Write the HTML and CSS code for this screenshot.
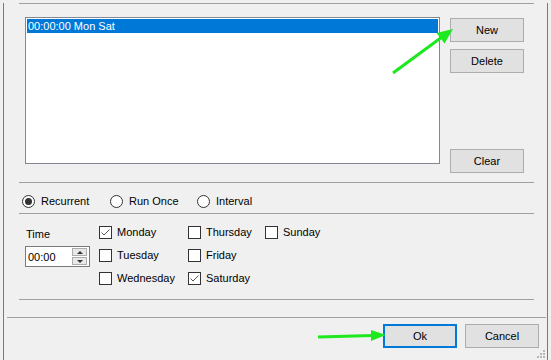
FILE: index.html
```html
<!DOCTYPE html>
<html lang="en">
<head>
    <meta charset="UTF-8">
    <title>Schedule</title>
    <link rel="stylesheet" href="styles.css">
</head>
<body>
    <div class="window">
        <div class="sep sep-first"></div>

        <div class="top">
            <div class="listbox">
                <div class="list-row selected">00:00:00 Mon Sat</div>
            </div>
            <div class="side-buttons">
                <button class="btn">New</button>
                <button class="btn">Delete</button>
                <button class="btn btn-clear">Clear</button>
            </div>
        </div>

        <div class="sep sep-mid"></div>

        <div class="mode-row">
            <label class="radio"><span class="radio-mark checked"></span>Recurrent</label>
            <label class="radio"><span class="radio-mark"></span>Run Once</label>
            <label class="radio"><span class="radio-mark"></span>Interval</label>
        </div>

        <div class="sep"></div>

        <div class="days">
            <div class="time-col">
                <div class="time-label">Time</div>
                <div class="spin">
                    <span class="spin-value">00:00</span>
                    <div class="spin-buttons">
                        <div class="spin-btn"><span class="tri-up"></span></div>
                        <div class="spin-btn"><span class="tri-down"></span></div>
                    </div>
                </div>
            </div>
            <div class="day-grid">
                <label class="check"><span class="box checked"><svg width="11" height="11" viewBox="0 0 11 11"><polyline points="1.5,5.5 4,8 9.5,2.5" fill="none" stroke="#555" stroke-width="1"/></svg></span>Monday</label>
                <label class="check"><span class="box"></span>Tuesday</label>
                <label class="check"><span class="box"></span>Wednesday</label>
                <label class="check"><span class="box"></span>Thursday</label>
                <label class="check"><span class="box"></span>Friday</label>
                <label class="check"><span class="box checked"><svg width="11" height="11" viewBox="0 0 11 11"><polyline points="1.5,5.5 4,8 9.5,2.5" fill="none" stroke="#555" stroke-width="1"/></svg></span>Saturday</label>
                <label class="check"><span class="box"></span>Sunday</label>
            </div>
        </div>

        <div class="sep"></div>

        <div class="footer-line"></div>
        <div class="footer">
            <button class="btn btn-default">Ok</button>
            <button class="btn">Cancel</button>
        </div>

        <svg class="grip" width="9" height="9" viewBox="0 0 9 9">
            <rect x="6" y="0" width="2" height="2" fill="#b8b8b8"/>
            <rect x="3" y="3" width="2" height="2" fill="#b8b8b8"/>
            <rect x="6" y="3" width="2" height="2" fill="#b8b8b8"/>
            <rect x="0" y="6" width="2" height="2" fill="#b8b8b8"/>
            <rect x="3" y="6" width="2" height="2" fill="#b8b8b8"/>
            <rect x="6" y="6" width="2" height="2" fill="#b8b8b8"/>
        </svg>
    </div>

    <!-- annotation arrows drawn over the dialog -->
    <svg class="arrows" width="551" height="360" viewBox="0 0 551 360">
        <line x1="393" y1="73" x2="442" y2="37" stroke="#1ee81e" stroke-width="3"/>
        <polygon points="453,29 444.5,43.5 436.5,33" fill="#1ee81e"/>
        <line x1="318" y1="337" x2="373" y2="335.5" stroke="#1ee81e" stroke-width="3"/>
        <polygon points="386,335 371,330 371,341" fill="#1ee81e"/>
    </svg>
</body>
</html>
```

FILE: styles.css
```css
body {
    margin: 0;
    padding: 0;
    background-color: #f0f0f0;
    font-family: "Liberation Sans", Arial, sans-serif;
    font-size: 11px;
    color: #000;
}
.window {
    position: relative;
    box-sizing: border-box;
    margin-left: 3px;
    width: 545px;
    height: 358px;
    border-left: 1px solid #7a7a7a;
    border-right: 1px solid #7a7a7a;
    border-bottom: 1px solid #7a7a7a;
}
.sep {
    height: 0;
    margin: 0 13px 0 15px;
    border-top: 1px solid #a0a0a0;
}
.sep-first {
    margin-top: 3px;
}
.sep-mid {
    margin-top: 9px;
}
.top {
    display: flex;
    align-items: flex-start;
    margin-top: 13px;
    padding-left: 21px;
}
.listbox {
    box-sizing: border-box;
    width: 415px;
    height: 147px;
    padding: 1px;
    background-color: #fff;
    border: 1px solid #828790;
}
.list-row {
    height: 14px;
    line-height: 14px;
    padding-left: 1px;
    white-space: nowrap;
}
.list-row.selected {
    background-color: #0078d7;
    color: #fff;
}
.side-buttons {
    display: flex;
    flex-direction: column;
    gap: 7px;
    height: 155px;
    margin-top: 1px;
    margin-left: 10px;
}
.btn {
    box-sizing: border-box;
    width: 74px;
    height: 24px;
    padding: 0;
    background-color: #e1e1e1;
    border: 1px solid #adadad;
    font-family: "Liberation Sans", Arial, sans-serif;
    font-size: 11px;
    color: #000;
}
.btn-clear {
    margin-top: auto;
}
.btn-default {
    border: 2px solid #0078d7;
}
.mode-row {
    box-sizing: border-box;
    display: grid;
    grid-template-columns: 88px 87px auto;
    align-items: start;
    height: 30px;
    padding: 12px 0 0 18px;
}
.radio {
    display: flex;
    align-items: center;
    line-height: 13px;
}
.radio-mark {
    box-sizing: border-box;
    display: flex;
    align-items: center;
    justify-content: center;
    width: 13px;
    height: 13px;
    margin-right: 6px;
    border: 1px solid #333;
    border-radius: 50%;
    background-color: #fff;
}
.radio-mark.checked::after {
    content: "";
    width: 7px;
    height: 7px;
    border-radius: 50%;
    background-color: #333;
}
.days {
    box-sizing: border-box;
    display: flex;
    height: 85px;
    padding: 12px 0 0 21px;
}
.time-col {
    width: 65px;
    margin-right: 9px;
}
.time-label {
    margin-top: 1px;
    line-height: 14px;
    padding-left: 1px;
}
.spin {
    box-sizing: border-box;
    display: flex;
    align-items: center;
    justify-content: space-between;
    height: 21px;
    margin-top: 5px;
    padding: 0 2px 0 2px;
    background-color: #fff;
    border: 1px solid #7a7a7a;
}
.spin-buttons {
    display: flex;
    flex-direction: column;
    gap: 1px;
}
.spin-btn {
    box-sizing: border-box;
    display: flex;
    align-items: center;
    justify-content: center;
    width: 15px;
    height: 8px;
    background-color: #e8e8e8;
    border: 1px solid #adadad;
}
.tri-up {
    width: 0;
    height: 0;
    border-left: 3px solid transparent;
    border-right: 3px solid transparent;
    border-bottom: 3px solid #333;
}
.tri-down {
    width: 0;
    height: 0;
    border-left: 3px solid transparent;
    border-right: 3px solid transparent;
    border-top: 3px solid #333;
}
.day-grid {
    display: grid;
    grid-auto-flow: column;
    grid-template-rows: repeat(3, 23px);
    grid-template-columns: 89px 77px auto;
}
.check {
    display: flex;
    align-items: flex-start;
    line-height: 13px;
    white-space: nowrap;
}
.box {
    box-sizing: border-box;
    display: flex;
    align-items: center;
    justify-content: center;
    width: 13px;
    height: 13px;
    margin-right: 5px;
    background-color: #fff;
    border: 1px solid #333;
}
.footer-line {
    height: 0;
    margin: 17px 1px 0 3px;
    border-top: 1px solid #a0a0a0;
}
.footer {
    display: flex;
    justify-content: flex-end;
    gap: 8px;
    margin-top: 6px;
    padding-right: 8px;
}
.grip {
    position: absolute;
    right: 1px;
    bottom: 1px;
}
.arrows {
    position: absolute;
    left: 0;
    top: 0;
    pointer-events: none;
}
```
